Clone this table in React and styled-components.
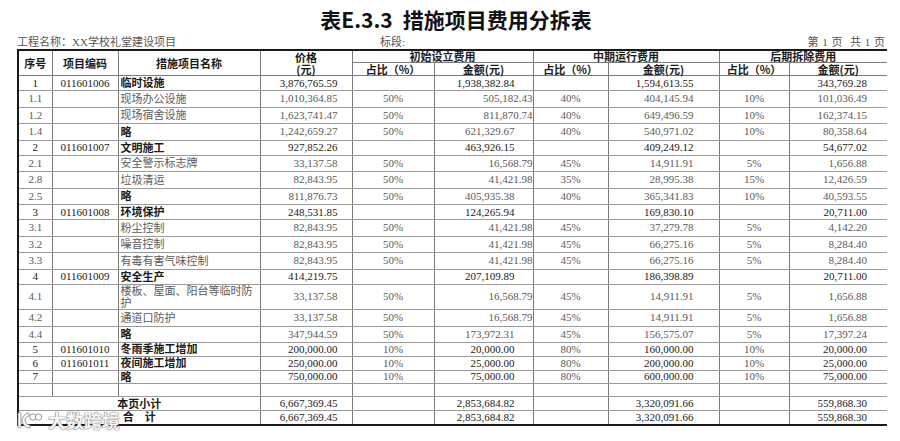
import React from "react";
import styled, { createGlobalStyle } from "styled-components";

const GlobalStyle = createGlobalStyle`
  html, body { margin: 0; padding: 0; background: #fff; }
  body { font-family: "Liberation Serif", "Noto Sans CJK SC", serif; color: #222; }
`;

const Page = styled.div`
  position: relative;
  width: 870px;
  height: 441px;
  padding-left: 17px;
  overflow: hidden;
`;

const Title = styled.h1`
  margin: 0;
  height: 36px;
  padding: 3px 0 0 8px;
  box-sizing: border-box;
  text-align: center;
  font-family: "Noto Sans CJK SC", sans-serif;
  font-size: 21px;
  font-weight: 700;
  line-height: 32px;
  color: #111;
`;

const Gap = styled.span`
  display: inline-block;
  width: 10px;
`;

const InfoRow = styled.div`
  display: grid;
  grid-template-columns: 363px 1fr auto;
  height: 13px;
  font-size: 11px;
  line-height: 13px;
  color: #555;
  font-family: "Liberation Serif", "Noto Sans CJK SC", serif;
`;

const PageNo = styled.span`
  word-spacing: 1px;
  padding-right: 2px;
`;

const Table = styled.table`
  width: 870px;
  table-layout: fixed;
  border-collapse: collapse;
  border: 2px solid #1a1a1a;
  font-size: 11px;
`;

const Head = styled.th`
  height: ${(p) => p.$h || 11}px;
  padding: 0;
  border: 1px solid #7a7a7a;
  font-family: "Noto Sans CJK SC", sans-serif;
  font-weight: 700;
  font-size: 11px;
  line-height: 11px;
  color: #1a1a1a;
  text-align: center;
  vertical-align: middle;
`;

const HeadLine = styled.span`
  display: block;
  line-height: 12px;
`;

const Row = styled.tr`
  height: ${(p) => p.$h}px;
`;

const Cell = styled.td`
  padding: 0 ${(p) => p.$pr || 0}px 0 ${(p) => p.$pl || 0}px;
  border-left: 1px solid #7a7a7a;
  border-right: 1px solid #7a7a7a;
  border-top: 1px solid #9a9a9a;
  border-bottom: 1px solid #9a9a9a;
  text-align: ${(p) => p.$align || "left"};
  vertical-align: middle;
  line-height: 11px;
  font-weight: ${(p) => (p.$bold ? 700 : 400)};
  color: ${(p) => (p.$dim ? "#5a5a5a" : "#1a1a1a")};
  white-space: ${(p) => (p.$wrap ? "normal" : "nowrap")};
  overflow: visible;
`;

const Name = styled.span`
  font-family: "Noto Sans CJK SC", sans-serif;
  font-weight: ${(p) => (p.$bold ? 700 : 400)};
`;

const Watermark = styled.div`
  position: absolute;
  left: 17px;
  top: 410px;
  display: flex;
  align-items: center;
  gap: 5px;
  font-family: "Noto Sans CJK SC", sans-serif;
  font-size: 18px;
  line-height: 20px;
  font-weight: 700;
  color: rgba(255, 255, 255, 0.95);
  text-shadow: 0 0 1px #7a7a7a, 0 0 1px #7a7a7a, 0 0 1px #7a7a7a;
`;

const cols = [34, 66, 142, 92, 82, 99, 75, 111, 70, 99];

const rows = [
  ["group", "1", "011601006", "临时设施", "3,876,765.59", "", "1,938,382.84", "", "1,594,613.55", "", "343,769.28"],
  ["item", "1.1", "", "现场办公设施", "1,010,364.85", "50%", "505,182.43", "40%", "404,145.94", "10%", "101,036.49"],
  ["item", "1.2", "", "现场宿舍设施", "1,623,741.47", "50%", "811,870.74", "40%", "649,496.59", "10%", "162,374.15"],
  ["misc", "1.4", "", "略", "1,242,659.27", "50%", "621,329.67", "40%", "540,971.02", "10%", "80,358.64"],
  ["group", "2", "011601007", "文明施工", "927,852.26", "", "463,926.15", "", "409,249.12", "", "54,677.02"],
  ["item", "2.1", "", "安全警示标志牌", "33,137.58", "50%", "16,568.79", "45%", "14,911.91", "5%", "1,656.88"],
  ["item", "2.8", "", "垃圾清运", "82,843.95", "50%", "41,421.98", "35%", "28,995.38", "15%", "12,426.59"],
  ["misc", "2.5", "", "略", "811,876.73", "50%", "405,935.38", "40%", "365,341.83", "10%", "40,593.55"],
  ["group", "3", "011601008", "环境保护", "248,531.85", "", "124,265.94", "", "169,830.10", "", "20,711.00"],
  ["item", "3.1", "", "粉尘控制", "82,843.95", "50%", "41,421.98", "45%", "37,279.78", "5%", "4,142.20"],
  ["item", "3.2", "", "噪音控制", "82,843.95", "50%", "41,421.98", "45%", "66,275.16", "5%", "8,284.40"],
  ["item", "3.3", "", "有毒有害气味控制", "82,843.95", "50%", "41,421.98", "45%", "66,275.16", "5%", "8,284.40"],
  ["group", "4", "011601009", "安全生产", "414,219.75", "", "207,109.89", "", "186,398.89", "", "20,711.00"],
  ["tall", "4.1", "", "楼板、屋面、阳台等临时防护", "33,137.58", "50%", "16,568.79", "45%", "14,911.91", "5%", "1,656.88"],
  ["item", "4.2", "", "通道口防护", "33,137.58", "50%", "16,568.79", "45%", "14,911.91", "5%", "1,656.88"],
  ["misc", "4.4", "", "略", "347,944.59", "50%", "173,972.31", "45%", "156,575.07", "5%", "17,397.24"],
  ["short", "5", "011601010", "冬雨季施工增加", "200,000.00", "10%", "20,000.00", "80%", "160,000.00", "10%", "20,000.00"],
  ["short", "6", "011601011", "夜间施工增加", "250,000.00", "10%", "25,000.00", "80%", "200,000.00", "10%", "25,000.00"],
  ["short", "7", "", "略", "750,000.00", "10%", "75,000.00", "80%", "600,000.00", "10%", "75,000.00"],
];

const totals = [
  ["本页小计", "6,667,369.45", "2,853,684.82", "3,320,091.66", "559,868.30"],
  ["合\u2003计", "6,667,369.45", "2,853,684.82", "3,320,091.66", "559,868.30"],
];

const heights = { group: 15, item: 16.5, misc: 16.5, tall: 25.5, short: 13.8 };

function BodyRow({ data }) {
  const [kind, no, code, name, price, p1, a1, p2, a2, p3, a3] = data;
  const group = kind === "group";
  const short = kind === "short";
  const dim = !group && !short;
  const nameBold = group || short || name === "略";
  return (
    <Row $h={heights[kind]}>
      <Cell $align="center" $dim={dim}>{no}</Cell>
      <Cell $align="center">{code}</Cell>
      <Cell $pl={2} $wrap={kind === "tall"} $dim={!nameBold}>
        <Name $bold={nameBold}>{name}</Name>
      </Cell>
      <Cell $align="right" $pr={14} $dim={dim}>{price}</Cell>
      <Cell $align="center" $dim>{p1}</Cell>
      <Cell $align="right" $pr={kind === "item" || kind === "tall" ? 0 : 18} $dim={dim}>{a1}</Cell>
      <Cell $align="center" $dim>{p2}</Cell>
      <Cell $align="right" $pr={25} $dim={dim}>{a2}</Cell>
      <Cell $align="center" $dim>{p3}</Cell>
      <Cell $align="right" $pr={20} $dim={dim}>{a3}</Cell>
    </Row>
  );
}

function Logo() {
  return (
    <svg width="26" height="18" viewBox="0 0 26 18" fill="none">
      <g stroke="#7f7f7f" strokeWidth="0.8" fill="rgba(255,255,255,0.95)">
        <rect x="1" y="1.5" width="3" height="15" rx="1" />
        <path d="M5 9 C6 5 9 2 12 2 L12 5 C10 5 8 7 8 9 C8 12 10 14 13 14 L13 17 C8 17 5 13 5 9 Z" />
        <circle cx="16" cy="6" r="3.2" />
        <circle cx="21.5" cy="6" r="3.2" />
      </g>
      <g fill="#fff">
        <circle cx="16" cy="6" r="1.4" />
        <circle cx="21.5" cy="6" r="1.4" />
      </g>
    </svg>
  );
}

export default function App() {
  return (
    <>
      <GlobalStyle />
      <Page>
        <Title>
          表E.3.3<Gap />措施项目费用分拆表
        </Title>
        <InfoRow>
          <span>工程名称：XX学校礼堂建设项目</span>
          <span>标段:</span>
          <PageNo>第 1 页&nbsp;&nbsp;共 1 页</PageNo>
        </InfoRow>
        <Table>
          <colgroup>
            {cols.map((w, i) => (
              <col key={i} style={{ width: w }} />
            ))}
          </colgroup>
          <thead>
            <tr>
              <Head rowSpan={2}>序号</Head>
              <Head rowSpan={2}>项目编码</Head>
              <Head rowSpan={2}>措施项目名称</Head>
              <Head rowSpan={2}>
                <HeadLine>价格</HeadLine>
                <HeadLine>(元)</HeadLine>
              </Head>
              <Head colSpan={2}>初始设立费用</Head>
              <Head colSpan={2}>中期运行费用</Head>
              <Head colSpan={2}>后期拆除费用</Head>
            </tr>
            <tr>
              <Head $h={12}>占比（%）</Head>
              <Head $h={12}>金额(元)</Head>
              <Head $h={12}>占比（%）</Head>
              <Head $h={12}>金额(元)</Head>
              <Head $h={12}>占比（%）</Head>
              <Head $h={12}>金额(元)</Head>
            </tr>
          </thead>
          <tbody>
            {rows.map((r) => (
              <BodyRow key={r[1]} data={r} />
            ))}
            <Row $h={12.8}>
              {cols.map((_, i) => (
                <Cell key={i} />
              ))}
            </Row>
            {totals.map(([label, price, a1, a2, a3]) => (
              <Row $h={14} key={label}>
                <Cell colSpan={3} $align="center">
                  <Name $bold>{label}</Name>
                </Cell>
                <Cell $align="right" $pr={14}>{price}</Cell>
                <Cell />
                <Cell $align="right" $pr={18}>{a1}</Cell>
                <Cell />
                <Cell $align="right" $pr={25}>{a2}</Cell>
                <Cell />
                <Cell $align="right" $pr={20}>{a3}</Cell>
              </Row>
            ))}
          </tbody>
        </Table>
        <Watermark>
          <Logo />
          <span>大数跨境</span>
        </Watermark>
      </Page>
    </>
  );
}
